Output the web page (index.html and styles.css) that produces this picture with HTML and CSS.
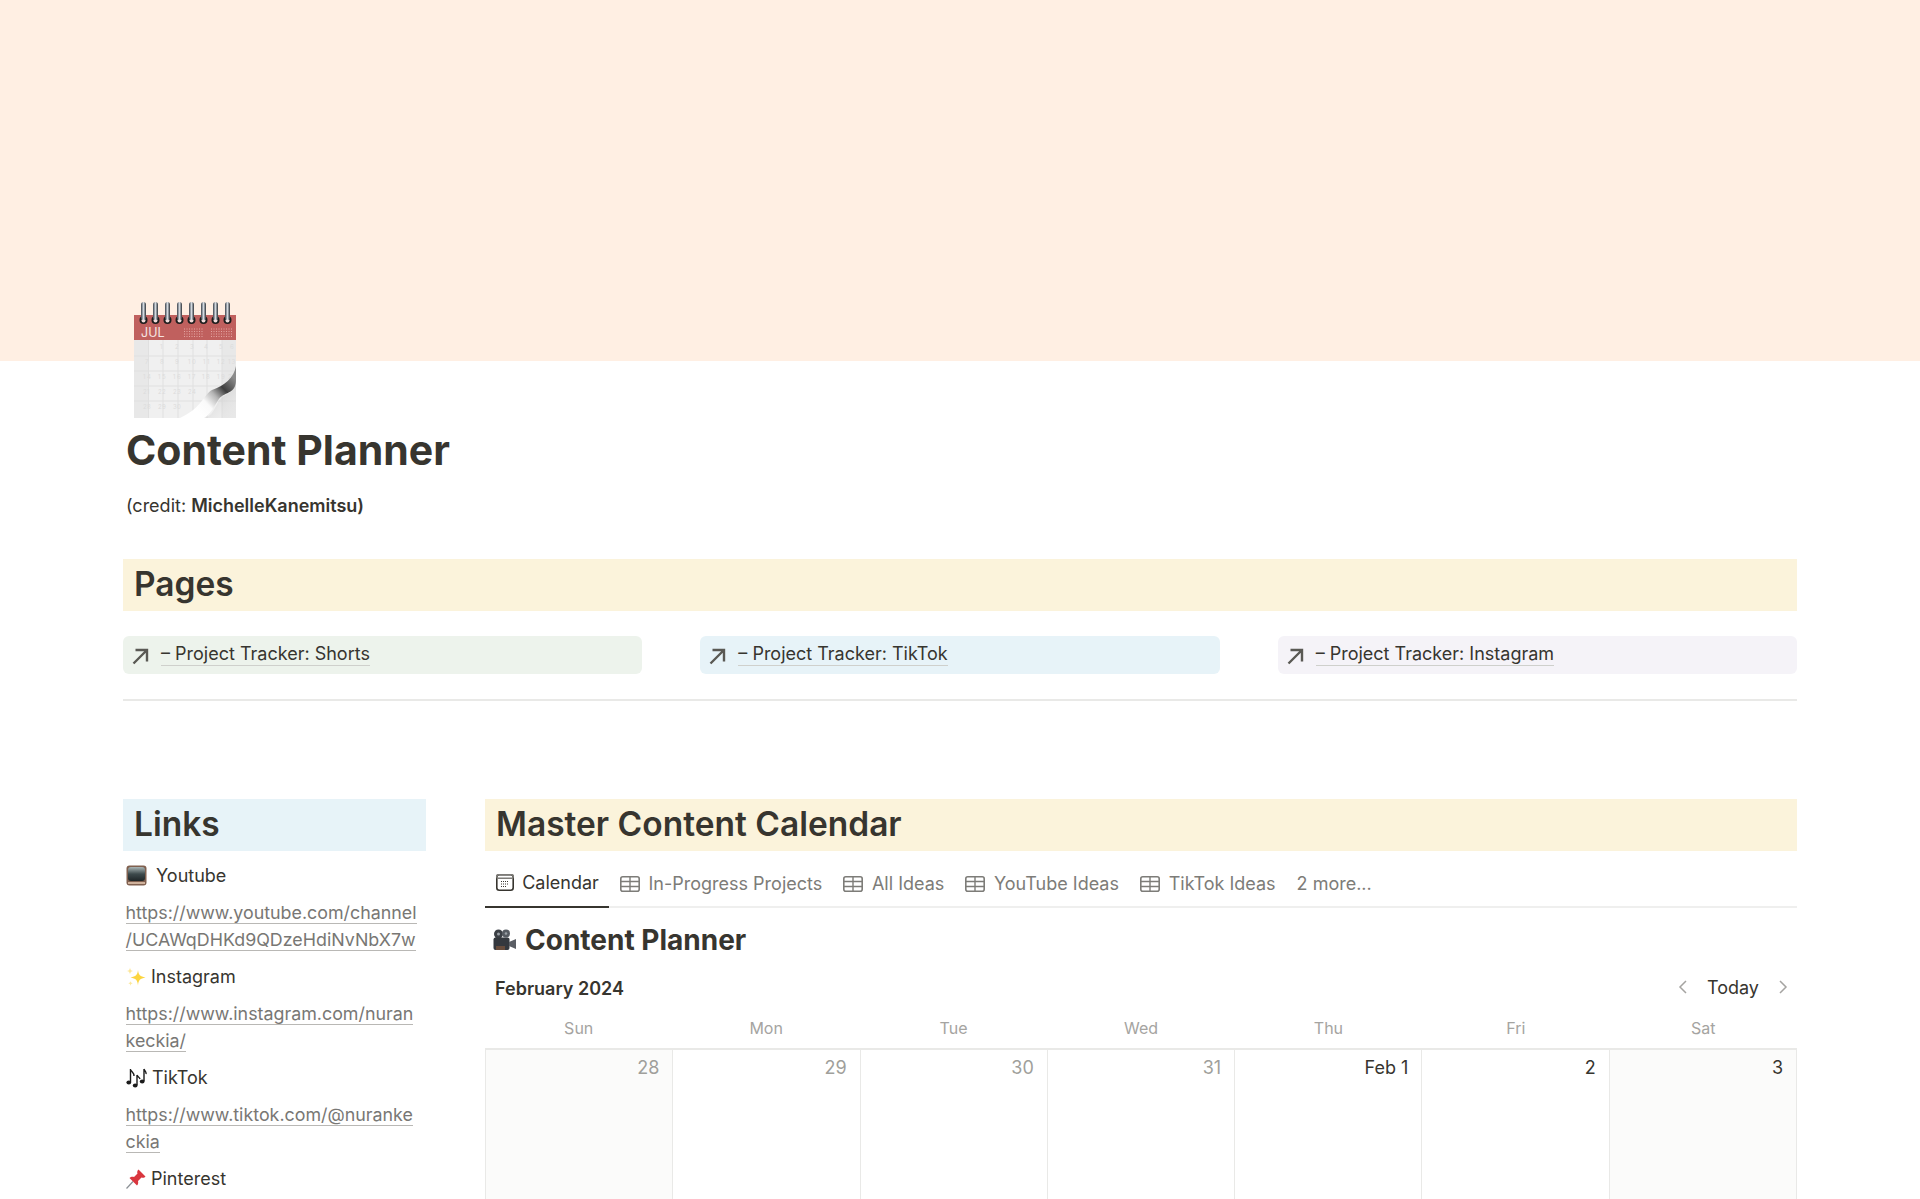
FILE: index.html
```html
<!DOCTYPE html>
<html lang="en">
<head>
    <meta charset="UTF-8">
    <title>Content Planner</title>
    <link rel="stylesheet" href="styles.css">
</head>
<body>
    <div class="cover"></div>

    <div class="page">
        <div class="page-icon">
            <svg width="102" height="118" viewBox="0 0 102 118">
                <defs>
                    <linearGradient id="ring" x1="0" x2="1" y1="0" y2="0">
                        <stop offset="0" stop-color="#39404a"/>
                        <stop offset="0.5" stop-color="#d3d9df"/>
                        <stop offset="1" stop-color="#2b3037"/>
                    </linearGradient>
                    <linearGradient id="curl" gradientUnits="userSpaceOnUse" x1="98" y1="76" x2="62" y2="110">
                        <stop offset="0" stop-color="#8c8c8c"/>
                        <stop offset="0.300" stop-color="#3f3f3f"/>
                        <stop offset="0.520" stop-color="#b5b5b5"/>
                        <stop offset="0.750" stop-color="#fafafa"/>
                        <stop offset="1" stop-color="#ffffff"/>
                    </linearGradient>
                    <linearGradient id="fade" x1="0" x2="1" y1="0" y2="1">
                        <stop offset="0" stop-color="#8a8a8a" stop-opacity="0.500"/>
                        <stop offset="1" stop-color="#efefef" stop-opacity="0"/>
                    </linearGradient>
                </defs>
                <rect x="0" y="15" width="102" height="25" fill="#c0605e"/>
                <rect x="0" y="40" width="102" height="78" fill="#f0f0f0"/>
                <rect x="0" y="40" width="14" height="78" fill="#e8e8e8"/>
                <rect x="88" y="40" width="14" height="78" fill="#e8e8e8"/>
                <path class="cal-grid" d="M14.500 40V118M29 40V118M44 40V118M59 40V118M73 40V118M88 40V118M0 56H102M0 71H102M0 86H102M0 101H102"/>
                <text class="cal-num" y="49" x="26 41 56 70 85 96">123456</text>
                <text class="cal-num" y="64" x="11 26 41 54 58 69 73 83 87 94 97.500">78910111213</text>
                <text class="cal-num" y="79" x="9 13 24 28 39 43 54 58 68 72 83 87 94 97.500">14151617181920</text>
                <text class="cal-num" y="94" x="9 13 24 28 39 43 54 58">21222324</text>
                <text class="cal-num" y="109" x="9 13 24 28 39 43">282930</text>
                <text x="7" y="37" class="cal-month">JUL</text>
                <path class="cal-dots" d="M50 29h20M50 31.500h20M50 34h20M50 36.500h20M77 29h21M77 31.500h21M77 34h21M77 36.500h21"/>
                <g>
                    <circle cx="9.500" cy="20" r="4" fill="#1d1d1d"/><circle cx="9.500" cy="20.500" r="2" fill="#f3dcdb"/><rect x="7" y="2" width="5" height="18" rx="2.500" fill="url(#ring)"/>
                    <circle cx="21.500" cy="20" r="4" fill="#1d1d1d"/><circle cx="21.500" cy="20.500" r="2" fill="#f3dcdb"/><rect x="19" y="2" width="5" height="18" rx="2.500" fill="url(#ring)"/>
                    <circle cx="33.500" cy="20" r="4" fill="#1d1d1d"/><circle cx="33.500" cy="20.500" r="2" fill="#f3dcdb"/><rect x="31" y="2" width="5" height="18" rx="2.500" fill="url(#ring)"/>
                    <circle cx="45.500" cy="20" r="4" fill="#1d1d1d"/><circle cx="45.500" cy="20.500" r="2" fill="#f3dcdb"/><rect x="43" y="2" width="5" height="18" rx="2.500" fill="url(#ring)"/>
                    <circle cx="57.500" cy="20" r="4" fill="#1d1d1d"/><circle cx="57.500" cy="20.500" r="2" fill="#f3dcdb"/><rect x="55" y="2" width="5" height="18" rx="2.500" fill="url(#ring)"/>
                    <circle cx="69.500" cy="20" r="4" fill="#1d1d1d"/><circle cx="69.500" cy="20.500" r="2" fill="#f3dcdb"/><rect x="67" y="2" width="5" height="18" rx="2.500" fill="url(#ring)"/>
                    <circle cx="81.500" cy="20" r="4" fill="#1d1d1d"/><circle cx="81.500" cy="20.500" r="2" fill="#f3dcdb"/><rect x="79" y="2" width="5" height="18" rx="2.500" fill="url(#ring)"/>
                    <circle cx="93.500" cy="20" r="4" fill="#1d1d1d"/><circle cx="93.500" cy="20.500" r="2" fill="#f3dcdb"/><rect x="91" y="2" width="5" height="18" rx="2.500" fill="url(#ring)"/>
                </g>
                <path d="M102 84C98 96 88 94 84 102C80 110 78 116 70 118H102Z" fill="url(#fade)"/>
                <path d="M102 66C100 78 90 86 78 90C70 94 68 108 46 118H70C80 112 82 100 88 96C94 92 102 92 102 80Z" fill="url(#curl)"/>
            </svg>
        </div>

        <h1 class="title">Content Planner</h1>
        <p class="credit">(credit: <b>MichelleKanemitsu)</b></p>

        <h2 class="bar bar-yellow">Pages</h2>

        <div class="page-links">
            <a class="page-link link-green">
                <svg class="arrow" width="17" height="17" viewBox="0 0 17 17"><path d="M1.500 15.500L15 2M3.500 2H15V13.500"/></svg>
                <span class="page-link-text">– Project Tracker: Shorts</span>
            </a>
            <a class="page-link link-blue">
                <svg class="arrow" width="17" height="17" viewBox="0 0 17 17"><path d="M1.500 15.500L15 2M3.500 2H15V13.500"/></svg>
                <span class="page-link-text">– Project Tracker: TikTok</span>
            </a>
            <a class="page-link link-purple">
                <svg class="arrow" width="17" height="17" viewBox="0 0 17 17"><path d="M1.500 15.500L15 2M3.500 2H15V13.500"/></svg>
                <span class="page-link-text">– Project Tracker: Instagram</span>
            </a>
        </div>

        <hr class="divider">

        <div class="columns">
            <div class="links-col">
                <h2 class="bar bar-blue">Links</h2>

                <p class="link-title link-title-wide">
                    <svg class="emoji" width="21" height="21" viewBox="0 0 21 21">
                        <defs>
                            <linearGradient id="screen" x1="0" x2="0" y1="0" y2="1">
                                <stop offset="0" stop-color="#aab6b6"/>
                                <stop offset="0.500" stop-color="#3d4a4c"/>
                                <stop offset="1" stop-color="#1f2628"/>
                            </linearGradient>
                        </defs>
                        <rect x="0.500" y="0.500" width="20" height="20" rx="3" fill="#80604f"/>
                        <rect x="2" y="2" width="17" height="14" rx="3" fill="url(#screen)"/>
                        <rect x="2" y="17" width="17" height="2" fill="#d0b29c"/>
                    </svg>
                    Youtube
                </p>
                <p class="link-url"><a>https://www.youtube.com/channel<br>/UCAWqDHKd9QDzeHdiNvNbX7w</a></p>

                <p class="link-title">
                    <svg class="emoji" width="20" height="20" viewBox="0 0 20 20">
                        <path d="M12 3C12.600 8 14 9.500 19.500 10.500C14 11.500 12.600 13 12 18.500C11.400 13 10 11.500 4.500 10.500C10 9.500 11.400 8 12 3Z" fill="#fcd53f"/>
                        <path d="M4 0.500C4.300 3 5 3.700 7.500 4C5 4.300 4.300 5 4 7.500C3.700 5 3 4.300 0.500 4C3 3.700 3.700 3 4 0.500Z" fill="#fce79a"/>
                        <path d="M4.500 14C4.700 15.500 5.300 16 7 16.300C5.300 16.600 4.700 17.200 4.500 19C4.300 17.200 3.700 16.600 2 16.300C3.700 16 4.300 15.500 4.500 14Z" fill="#fce79a"/>
                    </svg>
                    Instagram
                </p>
                <p class="link-url"><a>https://www.instagram.com/nuran<br>keckia/</a></p>

                <p class="link-title">
                    <svg class="emoji" width="21" height="20" viewBox="0 0 21 20">
                        <path class="note" d="M4.500 1V14M4.500 1C5 4 8.500 4.500 8 8"/>
                        <ellipse cx="2.800" cy="14.500" rx="2.400" ry="2" fill="#1c1c1c"/>
                        <path class="note" d="M11 7V17M11 7C11.500 9 13.500 9 14 11"/>
                        <ellipse cx="9.200" cy="17.500" rx="2.400" ry="2" fill="#1c1c1c"/>
                        <path class="note" d="M18 1V13M18 1C18.500 3 20.500 3.500 20 6"/>
                        <ellipse cx="16.200" cy="13.500" rx="2.400" ry="2" fill="#1c1c1c"/>
                    </svg>
                    TikTok
                </p>
                <p class="link-url"><a>https://www.tiktok.com/@nuranke<br>ckia</a></p>

                <p class="link-title">
                    <svg class="emoji" width="20" height="20" viewBox="0 0 20 20">
                        <path d="M0.500 19.500L7 12.500" stroke="#8a8f94" stroke-width="1.200"/>
                        <path d="M12.500 0.500L19.500 7.500C18.500 9 17 9 15.500 8.500L12 12C12.500 14 12 15.500 11 16.500L3.500 9C4.500 8 6.500 7.500 8 8L11.500 4.500C11 3.500 11 2 12.500 0.500Z" fill="#d9363e"/>
                    </svg>
                    Pinterest
                </p>
            </div>

            <div class="calendar-col">
                <h2 class="bar bar-yellow">Master Content Calendar</h2>

                <div class="tabs">
                    <div class="tab tab-active">
                        <svg class="tab-icon" width="18" height="17" viewBox="0 0 18 17">
                            <rect x="0.800" y="0.800" width="16.400" height="15.400" rx="2.500" class="icon-dark"/>
                            <rect x="0.800" y="0.800" width="16.400" height="3.500" rx="1.500" fill="#37352f"/>
                            <path class="icon-dots" d="M5 7.500h8M5 10h8M5 12.500h5"/>
                        </svg>
                        Calendar
                    </div>
                    <div class="tab">
                        <svg class="tab-icon" width="20" height="16" viewBox="0 0 20 16"><rect x="0.800" y="0.800" width="18.400" height="14.400" rx="2"/><path d="M1 5.500H19M1 10.500H19M10 1V15"/></svg>
                        In-Progress Projects
                    </div>
                    <div class="tab">
                        <svg class="tab-icon" width="20" height="16" viewBox="0 0 20 16"><rect x="0.800" y="0.800" width="18.400" height="14.400" rx="2"/><path d="M1 5.500H19M1 10.500H19M10 1V15"/></svg>
                        All Ideas
                    </div>
                    <div class="tab">
                        <svg class="tab-icon" width="20" height="16" viewBox="0 0 20 16"><rect x="0.800" y="0.800" width="18.400" height="14.400" rx="2"/><path d="M1 5.500H19M1 10.500H19M10 1V15"/></svg>
                        YouTube Ideas
                    </div>
                    <div class="tab">
                        <svg class="tab-icon" width="20" height="16" viewBox="0 0 20 16"><rect x="0.800" y="0.800" width="18.400" height="14.400" rx="2"/><path d="M1 5.500H19M1 10.500H19M10 1V15"/></svg>
                        TikTok Ideas
                    </div>
                    <div class="tab">2 more...</div>
                </div>

                <h3 class="view-title">
                    <svg class="view-emoji" width="23" height="22" viewBox="0 0 23 22">
                        <circle cx="5.500" cy="5" r="4.500" fill="#3b3f45"/>
                        <circle cx="13" cy="4.500" r="4" fill="#565b62"/>
                        <circle cx="5.500" cy="5" r="1.500" fill="#9aa0a6"/>
                        <circle cx="13" cy="4.500" r="1.300" fill="#9aa0a6"/>
                        <rect x="0.500" y="8.500" width="16" height="12.500" rx="2" fill="#34383e"/>
                        <path d="M16 13L23 10V20L16 17Z" fill="#5a5e64"/>
                        <rect x="3" y="17" width="9" height="4" fill="#8a5a3c" opacity="0.600"/>
                    </svg>
                    Content Planner
                </h3>

                <div class="cal-head">
                    <div class="cal-month-name">February 2024</div>
                    <div class="cal-nav">
                        <svg class="chevron" width="10" height="14" viewBox="0 0 10 14"><path d="M8 1L2 7L8 13"/></svg>
                        <span class="today">Today</span>
                        <svg class="chevron" width="10" height="14" viewBox="0 0 10 14"><path d="M2 1L8 7L2 13"/></svg>
                    </div>
                </div>

                <div class="weekdays">
                    <div>Sun</div><div>Mon</div><div>Tue</div><div>Wed</div><div>Thu</div><div>Fri</div><div>Sat</div>
                </div>

                <div class="week">
                    <div class="day weekend muted">28</div>
                    <div class="day muted">29</div>
                    <div class="day muted">30</div>
                    <div class="day muted">31</div>
                    <div class="day">Feb 1</div>
                    <div class="day">2</div>
                    <div class="day weekend">3</div>
                </div>
            </div>
        </div>
    </div>
</body>
</html>
```

FILE: styles.css
```css
html, body {
    height: 100%;
    overflow: hidden;
}

body {
    margin: 0;
    background: #fff;
    color: #37352f;
    font-family: Inter, "Liberation Sans", sans-serif;
    font-size: 18px;
}

.cover {
    height: 361px;
    background-color: #ffefe3;
}

.page {
    margin: 0 123px;
}

.page-icon {
    height: 118px;
    margin-top: -61px;
    margin-left: 11px;
}

.page-icon svg {
    display: block;
}

.cal-grid {
    stroke: #e0e0e0;
    stroke-width: 1;
    fill: none;
}

.cal-num {
    font-family: Inter, sans-serif;
    font-size: 6px;
    fill: #dcdcdc;
}

.cal-month {
    font-family: Inter, sans-serif;
    font-size: 12.500px;
    fill: #f6e3e1;
}

.cal-dots {
    stroke: #e3a5a2;
    stroke-width: 1;
    stroke-dasharray: 1 1.500;
    fill: none;
}

.title {
    margin: 8px 0 0 3px;
    font-size: 41px;
    line-height: 48px;
    font-weight: 700;
}

.credit {
    margin: 19px 0 0 3px;
    line-height: 26px;
}

.credit b {
    font-weight: 600;
}

.bar {
    margin: 0;
    padding: 0 11px;
    height: 52px;
    line-height: 50px;
    font-size: 33.500px;
    font-weight: 600;
}

.bar-yellow {
    background-color: #fbf3db;
}

.bar-blue {
    background-color: #e7f3f8;
}

.credit + .bar {
    margin-top: 40px;
}

.page-links {
    display: grid;
    grid-template-columns: repeat(3, 1fr);
    gap: 58px;
    margin-top: 25px;
}

.page-link {
    display: flex;
    align-items: center;
    gap: 12px;
    height: 38px;
    padding-left: 9px;
    padding-bottom: 1px;
    box-sizing: border-box;
    border-radius: 6px;
}

.link-green {
    background-color: #edf3ec;
}

.link-blue {
    background-color: #e7f3f8;
}

.link-purple {
    background-color: #f5f3f8;
}

.arrow {
    flex: none;
    margin-top: 3px;
}

.arrow path {
    fill: none;
    stroke: #5a5954;
    stroke-width: 2.400;
}

.page-link-text {
    line-height: 22px;
    border-bottom: 1px solid #cfd0cc;
}

.divider {
    margin: 25px 0 0;
    border: 0;
    border-top: 2px solid #e9e9e7;
}

.columns {
    display: flex;
    gap: 59px;
    margin-top: 98px;
}

.links-col {
    width: 303px;
    flex: none;
}

.link-title {
    margin: 10px 0 0 3px;
    line-height: 27px;
    display: flex;
    align-items: center;
    gap: 5px;
}

.link-title-wide {
    gap: 9px;
    margin-top: 11px;
}

.emoji {
    flex: none;
}

.note {
    fill: none;
    stroke: #1c1c1c;
    stroke-width: 1.400;
}

.link-url {
    margin: 10px 0 0 2.500px;
    line-height: 27px;
    font-size: 17.850px;
    white-space: nowrap;
    color: #787774;
}

.link-url a {
    border-bottom: 1px solid #b9b8b5;
}

.calendar-col {
    flex: 1;
    min-width: 0;
}

.tabs {
    display: flex;
    height: 53px;
    border-bottom: 2px solid #efefee;
    box-sizing: border-box;
    margin-top: 4px;
    color: #7d7c78;
}

.tab {
    display: flex;
    align-items: center;
    gap: 8.700px;
    padding: 4px 10.500px 0;
    margin-bottom: -2px;
}

.tab-active {
    color: #37352f;
    border-bottom: 2px solid #37352f;
    box-sizing: border-box;
}

.tab-icon rect {
    fill: none;
    stroke: #7d7c78;
    stroke-width: 1.600;
}

.tab-icon path {
    fill: none;
    stroke: #7d7c78;
    stroke-width: 1.400;
}

.tab-icon .icon-dark {
    stroke: #37352f;
    stroke-width: 1.600;
}

.tab-icon .icon-dots {
    stroke: #37352f;
    stroke-width: 1.200;
    stroke-dasharray: 1 1;
}

.view-title {
    display: flex;
    align-items: center;
    gap: 9px;
    margin: 14px 0 0 8px;
    font-size: 28px;
    line-height: 36px;
    font-weight: 700;
}

.cal-head {
    display: flex;
    justify-content: space-between;
    align-items: center;
    height: 30px;
    margin-top: 15px;
    padding: 0 9px 0 10px;
}

.cal-month-name {
    font-weight: 600;
}

.cal-nav {
    display: flex;
    align-items: center;
    gap: 19px;
    margin-top: -2px;
}

.chevron path {
    fill: none;
    stroke: #a5a4a1;
    stroke-width: 1.500;
}

.weekdays {
    display: grid;
    grid-template-columns: repeat(7, 1fr);
    height: 40px;
    margin-top: 5px;
    align-items: center;
    text-align: center;
    color: #a5a4a1;
    font-size: 16px;
}

.week {
    display: grid;
    grid-template-columns: repeat(7, 1fr);
    height: 300px;
    border-top: 2px solid #e9e9e7;
    border-right: 1px solid #e9e9e7;
}

.day {
    padding: 6px 13px 0 0;
    text-align: right;
    line-height: 24px;
    border-left: 1px solid #e9e9e7;
}

.weekend {
    background-color: #fbfbfa;
}

.muted {
    color: #a09f9b;
}
```
